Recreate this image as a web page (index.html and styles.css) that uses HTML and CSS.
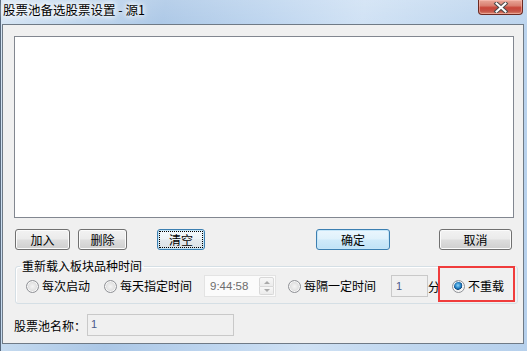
FILE: index.html
```html
<!DOCTYPE html>
<html lang="zh-CN">
<head>
<meta charset="utf-8">
<title>股票池备选股票设置 - 源1</title>
<link rel="stylesheet" href="styles.css">
</head>
<body>
<div class="window">
  <div class="titlebar">
    <span class="title">股票池备选股票设置 - 源1</span>
    <button class="close" aria-label="关闭">
      <svg width="16" height="11" viewBox="0 0 16 11">
        <path d="M3.5 1.5 L12.5 9.5 M12.5 1.5 L3.5 9.5" stroke="#4a4a4a" stroke-width="4" stroke-linecap="square"/>
        <path d="M3.5 1.5 L12.5 9.5 M12.5 1.5 L3.5 9.5" stroke="#ffffff" stroke-width="2" stroke-linecap="square"/>
      </svg>
    </button>
  </div>
  <div class="client">
    <div class="listbox"></div>
    <div class="btnrow">
      <button class="btn b-add">加入</button>
      <button class="btn b-del">删除</button>
      <button class="btn b-clear focus"><span class="focusring">清空</span></button>
      <button class="btn b-ok default">确定</button>
      <button class="btn b-cancel">取消</button>
    </div>
    <fieldset class="group">
      <legend>重新载入板块品种时间</legend>
      <div class="radiorow">
        <label class="radio r1"><span class="dot"></span><span>每次启动</span></label>
        <label class="radio r2"><span class="dot"></span><span>每天指定时间</span></label>
        <div class="timebox">
          <span class="timeval">9:44:58</span>
          <span class="spin"><span class="sp up"></span><span class="sp down"></span></span>
        </div>
        <label class="radio r3"><span class="dot"></span><span>每隔一定时间</span></label>
        <div class="numbox">1</div>
        <span class="unit">分</span>
        <label class="radio r4"><span class="dot checked"></span><span>不重载</span></label>
      </div>
    </fieldset>
    <div class="namerow">
      <span class="namelabel">股票池名称：</span>
      <div class="namebox">1</div>
    </div>
    <div class="highlight"></div>
  </div>
</div>
</body>
</html>
```

FILE: styles.css
```css
html, body {
  margin: 0;
  padding: 0;
}
body {
  width: 527px;
  height: 351px;
  overflow: hidden;
  font-family: "Noto Sans CJK SC", "Noto Sans", sans-serif;
  font-size: 12px;
  color: #000;
}
.window {
  width: 527px;
  height: 351px;
  display: flex;
  flex-direction: column;
  background:
    linear-gradient(to bottom, rgba(255,255,255,0.15), rgba(255,255,255,0) 30px),
    linear-gradient(100deg, #d6e5f4 0%, #c2d8ee 12%, #abc7e6 28%, #bcd4ee 45%, #cfe1f4 62%, #c0d7ef 80%, #b6d0ec 100%);
  border-left: 1px solid #58697d;
  box-sizing: border-box;
}
.titlebar {
  height: 24px;
  display: flex;
  justify-content: space-between;
  align-items: flex-start;
  flex: none;
}
.title {
  margin-left: 2px;
  margin-top: 1px;
  line-height: 17px;
  font-size: 12.5px;
  color: #000;
  text-shadow: 0 0 4px #fff, 0 0 6px #fff, 0 0 8px rgba(255,255,255,0.9);
  white-space: nowrap;
}
.close {
  width: 45px;
  height: 15px;
  margin-right: 4px;
  padding: 0;
  border: 1px solid #6c2a22;
  border-top: none;
  border-radius: 0 0 4px 4px;
  background: linear-gradient(to bottom, #e9a899 0%, #d98071 40%, #c8473a 55%, #c65447 80%, #d98a72 100%);
  box-shadow: inset 0 0 0 1px rgba(255,200,190,0.5);
  display: flex;
  align-items: center;
  justify-content: center;
}
.close svg { display: block; }
.client {
  position: relative;
  margin-left: 1px;
  width: 522px;
  height: 320px;
  box-sizing: border-box;
  border: 1px solid #6f7a86;
  background: #f0f0f0;
  display: flex;
  flex-direction: column;
  flex: none;
}
.listbox {
  margin-left: 11px;
  margin-top: 11px;
  width: 500px;
  height: 182px;
  box-sizing: border-box;
  border: 1px solid #828790;
  background: #fff;
  flex: none;
}
.btnrow {
  display: flex;
  margin-top: 11px;
  height: 21px;
  flex: none;
}
.btn {
  height: 21px;
  box-sizing: border-box;
  padding: 0;
  border: 1px solid #707070;
  border-radius: 3px;
  background: linear-gradient(to bottom, #f2f2f2 0%, #ebebeb 48%, #dddddd 52%, #cfcfcf 100%);
  box-shadow: inset 0 0 0 1px #fbfbfb;
  font-family: inherit;
  font-size: 12px;
  line-height: 19px;
  color: #000;
  text-align: center;
}
.b-add { width: 55px; margin-left: 12px; }
.b-del { width: 49px; margin-left: 8px; }
.b-clear { width: 48px; margin-left: 30px; }
.b-ok { width: 74px; margin-left: 111px; }
.b-cancel { width: 73px; margin-left: 49px; }
.btn.focus {
  border-color: #3c7fb1;
  background: linear-gradient(to bottom, #f4f9fc 0%, #eef3f6 48%, #e3e9ed 52%, #dae1e6 100%);
  box-shadow: inset 0 0 0 1px #c3e4f6;
  position: relative;
}
.focusring {
  display: block;
  margin: 2px;
  height: 15px;
  line-height: 15px;
  outline: 1px dotted #000;
}
.btn.default {
  border-color: #3c7fb1;
  background: linear-gradient(to bottom, #eaf6fd 0%, #dff1fb 48%, #cfeafa 52%, #bfe2f6 100%);
  box-shadow: inset 0 0 0 1px #c6e6f8;
}
.group {
  margin: 9px 0 0 12px;
  width: 503px;
  box-sizing: border-box;
  padding: 0 0 6px 0;
  border: 1px solid #d5dfe5;
  border-radius: 3px;
  box-shadow: inset 1px 1px 0 #fff;
  flex: none;
  min-width: 0;
}
.group legend {
  margin-left: 4px;
  padding: 0 2px;
  line-height: 14px;
  font-size: 12px;
}
.radiorow {
  display: flex;
  align-items: center;
  height: 22px;
  margin-top: 2px;
}
.radio {
  display: flex;
  align-items: center;
  white-space: nowrap;
  line-height: 14px;
}
.dot {
  width: 13px;
  height: 13px;
  box-sizing: border-box;
  border-radius: 50%;
  border: 1px solid #8f9196;
  background: radial-gradient(circle at 50% 50%, #f4f4f4 0%, #e4e4e4 45%, #d4d4d4 70%, #f6f6f6 100%);
  margin-right: 3px;
  flex: none;
  box-shadow: inset 0 0 0 1px #f8f8f8;
}
.dot.checked {
  background:
    radial-gradient(circle at 45% 40%, #8fd3f7 0%, #2d8cce 28%, #0f4c86 46%, #f2f2f2 52%, #e0e0e0 75%, #f6f6f6 100%);
}
.r1 { margin-left: 10px; }
.r2 { margin-left: 14px; }
.r3 { margin-left: 12px; }
.r4 { margin-left: 12px; }
.timebox {
  margin-left: 12px;
  width: 72px;
  height: 22px;
  box-sizing: border-box;
  border: 1px solid #e3e3e3;
  background: #fbfbfb;
  display: flex;
  align-items: center;
  justify-content: space-between;
}
.timeval {
  font-family: "Liberation Sans", Arial, sans-serif;
  font-size: 11.5px;
  color: #6d6d6d;
  margin-left: 5px;
}
.spin {
  width: 15px;
  height: 18px;
  display: flex;
  flex-direction: column;
  margin-right: 1px;
}
.sp {
  flex: 1;
  border: 1px solid #d8d8d8;
  background: linear-gradient(#f7f7f7, #ececec);
  position: relative;
}
.sp.up { border-radius: 2px 2px 0 0; }
.sp.down { border-radius: 0 0 2px 2px; border-top: none; }
.sp::after {
  content: "";
  position: absolute;
  left: 4px;
  top: 3px;
  border-left: 3px solid transparent;
  border-right: 3px solid transparent;
}
.sp.up::after { border-bottom: 3px solid #a9a9a9; }
.sp.down::after { border-top: 3px solid #a9a9a9; top: 2px; }
.numbox {
  margin-left: 15px;
  width: 37px;
  height: 22px;
  box-sizing: border-box;
  border: 1px solid #c9c9c9;
  background: #f0f0f0;
  font-family: "Liberation Sans", Arial, sans-serif;
  font-size: 11px;
  line-height: 20px;
  padding-left: 4px;
  color: #4a5a8a;
}
.unit {
  margin-left: 0;
}
.namerow {
  display: flex;
  align-items: center;
  margin-top: 10px;
  margin-left: 11px;
  flex: none;
}
.namelabel {
  width: 73px;
  white-space: nowrap;
}
.namebox {
  width: 147px;
  height: 22px;
  box-sizing: border-box;
  border: 1px solid #c9c9c9;
  background: #f0f0f0;
  font-family: "Liberation Sans", Arial, sans-serif;
  font-size: 11px;
  line-height: 18px;
  padding-left: 3px;
  color: #4a5a8a;
}
.highlight {
  position: absolute;
  left: 435px;
  top: 241px;
  width: 77px;
  height: 36px;
  box-sizing: border-box;
  border: 2px solid #f03c3c;
  pointer-events: none;
}
```
